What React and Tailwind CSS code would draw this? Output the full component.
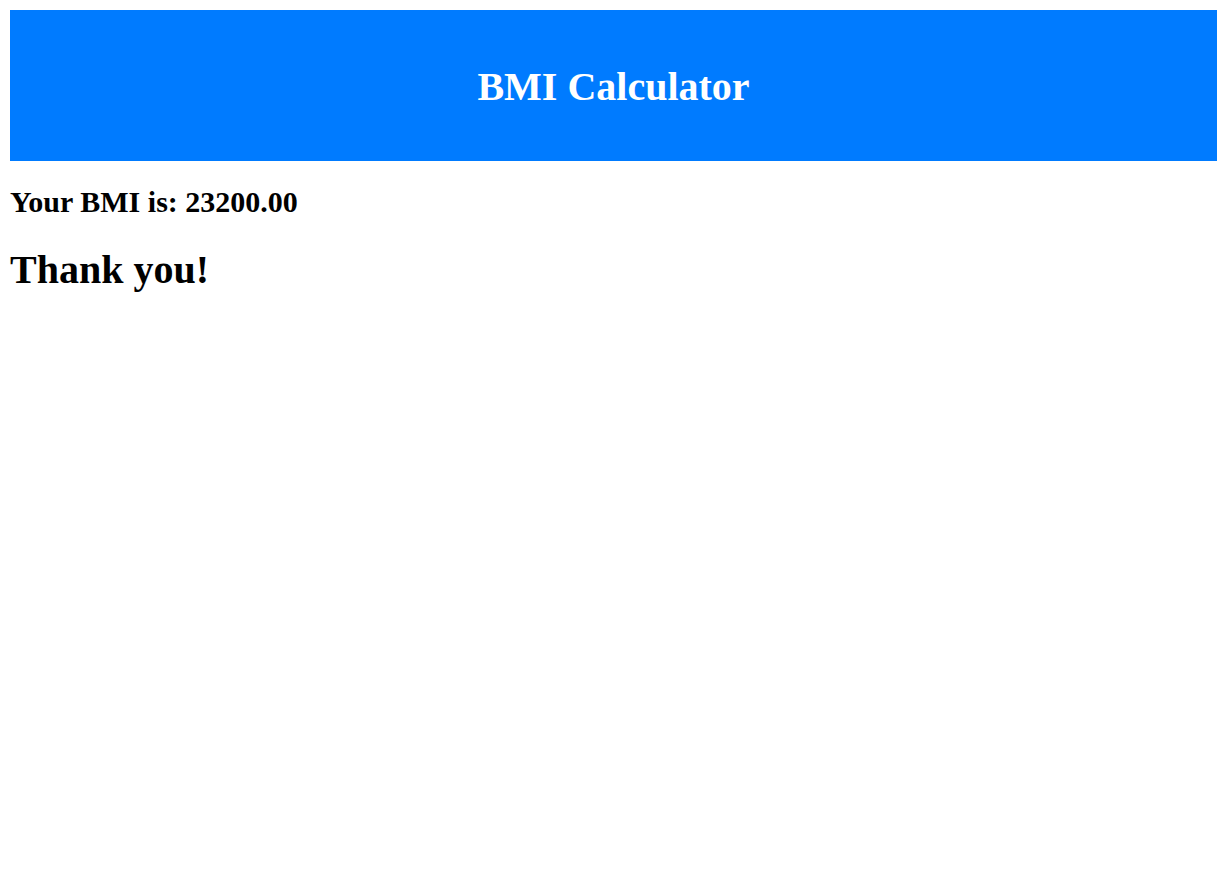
import React from 'react';

const bmi = 23200;

const App = () => {
  return (
    <div className="min-h-screen bg-white pl-[10px] pr-[9px] pt-[10px] font-['Liberation_Serif','Times_New_Roman',serif] text-black">
      <header className="flex h-[151px] items-center justify-center bg-[#007bff] pt-[3px] text-white">
        <h1 className="text-[40px] font-bold leading-[46px]">BMI Calculator</h1>
      </header>
      <h2 className="mt-[24px] text-[30px] font-bold leading-[33px]">
        Your BMI is: {bmi.toFixed(2)}
      </h2>
      <h1 className="mt-[29px] text-[40px] font-bold leading-[46px]">Thank you!</h1>
    </div>
  );
};

export default App;
